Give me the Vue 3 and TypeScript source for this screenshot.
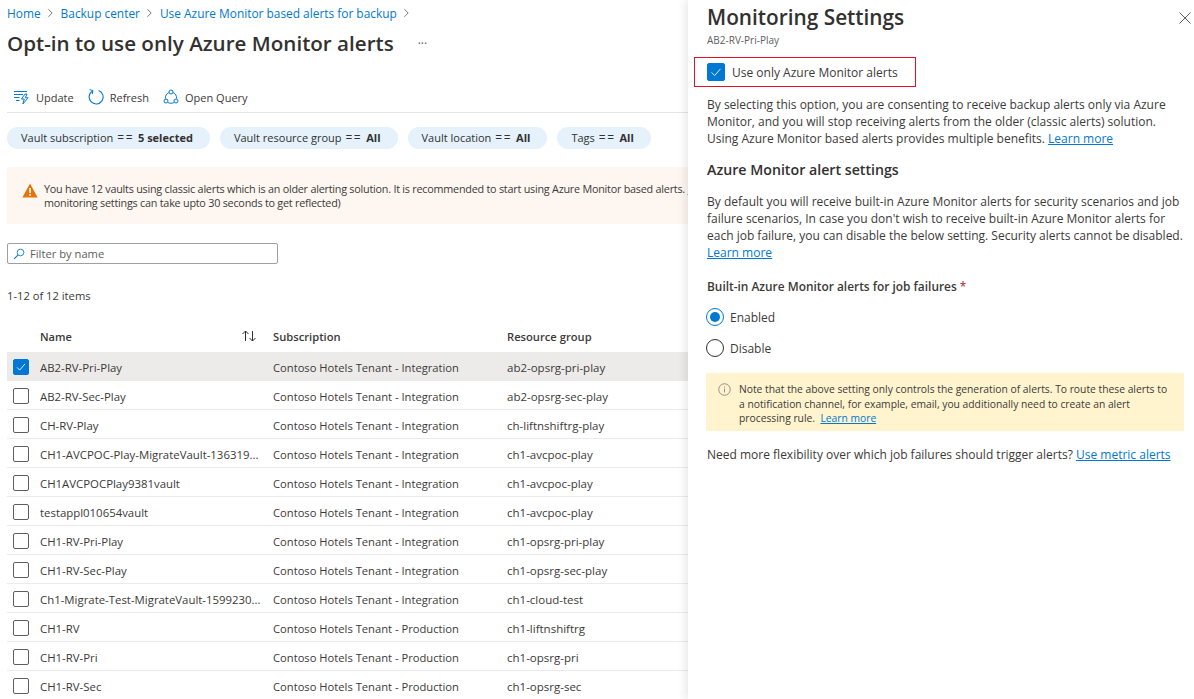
<script setup lang="ts">
interface Vault {
  name: string;
  subscription: string;
  group: string;
}

const tenant = 'Contoso Hotels Tenant - Integration';
const prod = 'Contoso Hotels Tenant - Production';

const vaults: Vault[] = [
  { name: 'AB2-RV-Pri-Play', subscription: tenant, group: 'ab2-opsrg-pri-play' },
  { name: 'AB2-RV-Sec-Play', subscription: tenant, group: 'ab2-opsrg-sec-play' },
  { name: 'CH-RV-Play', subscription: tenant, group: 'ch-liftnshiftrg-play' },
  { name: 'CH1-AVCPOC-Play-MigrateVault-136319...', subscription: tenant, group: 'ch1-avcpoc-play' },
  { name: 'CH1AVCPOCPlay9381vault', subscription: tenant, group: 'ch1-avcpoc-play' },
  { name: 'testappl010654vault', subscription: tenant, group: 'ch1-avcpoc-play' },
  { name: 'CH1-RV-Pri-Play', subscription: tenant, group: 'ch1-opsrg-pri-play' },
  { name: 'CH1-RV-Sec-Play', subscription: tenant, group: 'ch1-opsrg-sec-play' },
  { name: 'Ch1-Migrate-Test-MigrateVault-1599230...', subscription: tenant, group: 'ch1-cloud-test' },
  { name: 'CH1-RV', subscription: prod, group: 'ch1-liftnshiftrg' },
  { name: 'CH1-RV-Pri', subscription: prod, group: 'ch1-opsrg-pri' },
  { name: 'CH1-RV-Sec', subscription: prod, group: 'ch1-opsrg-sec' },
];

const pills = [
  { label: 'Vault subscription', value: '5 selected' },
  { label: 'Vault resource group', value: 'All' },
  { label: 'Vault location', value: 'All' },
  { label: 'Tags', value: 'All' },
];
</script>

<template>
  <div class="page">
    <main class="left">
      <nav class="crumbs">
        <a>Home</a>
        <svg class="chev" viewBox="0 0 8 12"><path d="M1.5 1.5 6 6l-4.5 4.5" /></svg>
        <a>Backup center</a>
        <svg class="chev" viewBox="0 0 8 12"><path d="M1.5 1.5 6 6l-4.5 4.5" /></svg>
        <a>Use Azure Monitor based alerts for backup</a>
        <svg class="chev" viewBox="0 0 8 12"><path d="M1.5 1.5 6 6l-4.5 4.5" /></svg>
      </nav>
      <div class="title-row">
        <h1>Opt-in to use only Azure Monitor alerts</h1>
        <span class="dots">···</span>
      </div>

      <div class="toolbar">
        <button class="tool">
          <svg viewBox="0 0 16 16" class="tool-icon">
            <path d="M0 2.5h13M0 5.5h9M0 8.5h5.5M2 11.5h3.5" fill="none" stroke="#0078d4" />
            <path d="M11 5 7.5 10h2.8L8.8 15l5.4-6.2h-2.9L13 5z" fill="none" stroke="#0078d4" />
          </svg>
          Update
        </button>
        <button class="tool">
          <svg viewBox="0 0 16 16" class="tool-icon">
            <path d="M4.6 1.9A7 7 0 1 0 10.6 1.4" fill="none" stroke="#0078d4" stroke-width="1.1" />
            <path d="M1.6.6 5 1.7 4.2 5" fill="none" stroke="#0078d4" />
          </svg>
          Refresh
        </button>
        <button class="tool">
          <svg viewBox="0 0 16 16" class="tool-icon">
            <path d="M5.9 3.6C3.6 4.6 2.2 6.8 2.4 9.6M10.1 3.6c2.3 1 3.7 3.2 3.5 6M5 13.6c1.8.9 4.2.9 6 0" fill="none" stroke="#0078d4" />
            <circle cx="8" cy="3" r="2" fill="#fff" stroke="#0078d4" />
            <circle cx="3" cy="12" r="2" fill="#fff" stroke="#0078d4" />
            <circle cx="13" cy="12" r="2" fill="#fff" stroke="#0078d4" />
          </svg>
          Open Query
        </button>
      </div>

      <div class="pills">
        <span v-for="p in pills" :key="p.label" class="pill">{{ p.label }}<span class="eq">==</span><b>{{ p.value }}</b></span>
      </div>

      <div class="banner">
        <svg class="warn" viewBox="0 0 16 15">
          <path d="M8 .5 15.6 14.5H.4z" fill="#e8710a" />
          <path d="M7.2 5h1.6v5H7.2zM7.2 11h1.6v1.7H7.2z" fill="#fff" />
        </svg>
        <p>You have 12 vaults using classic alerts which is an older alerting solution. It is recommended to start using Azure Monitor based alerts. <a>Learn more</a><br />monitoring settings can take upto 30 seconds to get reflected)</p>
      </div>

      <div class="filter">
        <svg viewBox="0 0 14 14" class="search">
          <circle cx="8.8" cy="5.2" r="3.9" fill="none" stroke="#0078d4" />
          <path d="M6 8 1.3 12.7" stroke="#0078d4" stroke-width="1.2" />
        </svg>
        <span>Filter by name</span>
      </div>

      <div class="count">1-12 of 12 items</div>

      <div class="table">
        <div class="row head">
          <span class="cell-check"></span>
          <span class="cell-name">Name</span>
          <svg class="sort" viewBox="0 0 16 12">
            <path d="M4.5 11V1M1.5 4l3-3 3 3M11.5 1v10M8.5 8l3 3 3-3" fill="none" stroke="#323130" />
          </svg>
          <span class="cell-sub">Subscription</span>
          <span class="cell-group">Resource group</span>
        </div>
        <div v-for="(v, i) in vaults" :key="v.name" class="row" :class="{ selected: i === 0 }">
          <span class="cell-check">
            <span class="check" :class="{ on: i === 0 }">
              <svg v-if="i === 0" viewBox="0 0 16 16"><path d="M3.5 8.5 6.5 11.5 12.5 4.5" fill="none" stroke="#fff" /></svg>
            </span>
          </span>
          <span class="cell-name">{{ v.name }}</span>
          <span class="cell-sub">{{ v.subscription }}</span>
          <span class="cell-group">{{ v.group }}</span>
        </div>
      </div>
    </main>

    <aside class="panel">
      <div class="panel-head">
        <div>
          <h2>Monitoring Settings</h2>
          <div class="sub">AB2-RV-Pri-Play</div>
        </div>
        <svg class="close" viewBox="0 0 12 12"><path d="M.5.5l11 11M11.5.5l-11 11" stroke="#605e5c" /></svg>
      </div>

      <div class="opt-in">
        <span class="check big on">
          <svg viewBox="0 0 18 18"><path d="M4 9.5 7.5 13 14 5.5" fill="none" stroke="#fff" /></svg>
        </span>
        <span>Use only Azure Monitor alerts</span>
      </div>

      <p class="para">By selecting this option, you are consenting to receive backup alerts only via Azure Monitor, and you will stop receiving alerts from the older (classic alerts) solution. Using Azure Monitor based alerts provides multiple benefits. <a>Learn more</a></p>

      <h3>Azure Monitor alert settings</h3>

      <p class="para second">By default you will receive built-in Azure Monitor alerts for security scenarios and job failure scenarios, In case you don't wish to receive built-in Azure Monitor alerts for each job failure, you can disable the below setting. Security alerts cannot be disabled. <a>Learn more</a></p>

      <div class="field-label">Built-in Azure Monitor alerts for job failures <span class="req">*</span></div>

      <div class="radio-row">
        <span class="radio on"></span>
        <span>Enabled</span>
      </div>
      <div class="radio-row next">
        <span class="radio"></span>
        <span>Disable</span>
      </div>

      <div class="note">
        <svg class="info" viewBox="0 0 14 14">
          <circle cx="7" cy="7" r="6.2" fill="none" stroke="#8a8886" />
          <path d="M7 6v4.2M7 3.7v1.2" stroke="#8a8886" />
        </svg>
        <p>Note that the above setting only controls the generation of alerts. To route these alerts to a notification channel, for example, email, you additionally need to create an alert processing rule. &nbsp;<a>Learn more</a></p>
      </div>

      <p class="para last">Need more flexibility over which job failures should trigger alerts? <a>Use metric alerts</a></p>
    </aside>
  </div>
</template>

<style>
html,
body {
  margin: 0;
  background: #fff;
  overflow: hidden;
}
</style>

<style scoped>
.page {
  display: flex;
  width: 1194px;
  height: 699px;
  overflow: hidden;
  font-family: "Open Sans", "Noto Sans", sans-serif;
  font-size: 12px;
  color: #3b3a39;
}

.left {
  width: 688px;
  flex: none;
  padding-left: 7px;
  box-sizing: border-box;
  overflow: hidden;
}

.crumbs {
  display: flex;
  align-items: center;
  height: 16px;
  margin-top: 5px;
  color: #0078d4;
  font-size: 11.9px;
  white-space: nowrap;
}

.chev {
  width: 7px;
  height: 10px;
  margin: 0 7px 0 6px;
  fill: none;
  stroke: #605e5c;
}

.title-row {
  display: flex;
  align-items: center;
  height: 30px;
  margin-top: 7px;
}

h1 {
  margin: 0;
  font-size: 20.6px;
  font-weight: 600;
  color: #323130;
  white-space: nowrap;
}

.dots {
  margin-left: 24px;
  color: #605e5c;
  font-size: 12px;
}

.toolbar {
  display: flex;
  align-items: center;
  gap: 14px;
  height: 24px;
  margin-top: 27px;
  padding: 0 0 3px 7px;
  border-bottom: 1px solid #e5e5e5;
}

.tool {
  display: flex;
  align-items: center;
  gap: 6px;
  padding: 0;
  border: 0;
  background: none;
  font: inherit;
  color: #3b3a39;
  font-size: 11px;
}

.tool-icon {
  width: 16px;
  height: 16px;
}

.pills {
  display: flex;
  gap: 10px;
  margin-top: 14px;
}

.pill {
  display: block;
  height: 22px;
  line-height: 21px;
  padding: 0 17px 0 14px;
  border-radius: 11px;
  background: #e5f1fb;
  color: #323130;
  font-size: 11px;
  white-space: nowrap;
}

.eq {
  margin: 0 4px;
  font-size: 12px;
  letter-spacing: 1.5px;
}

.pill b {
  font-weight: 700;
}

.banner {
  display: flex;
  align-items: flex-start;
  height: 57px;
  margin-top: 18px;
  padding: 15px 0 0 15px;
  box-sizing: border-box;
  width: 700px;
  background: #fef7f1;
  white-space: nowrap;
}

.banner p {
  margin: 0;
  font-size: 10.8px;
  letter-spacing: -0.23px;
  line-height: 14px;
  color: #3b3a39;
}

.banner a {
  text-decoration: underline;
}

.warn {
  flex: none;
  width: 16px;
  height: 15px;
  margin: 1px 6px 0 0;
}

.filter {
  display: flex;
  align-items: center;
  gap: 5px;
  width: 271px;
  height: 21px;
  margin-top: 19px;
  padding-left: 5px;
  box-sizing: border-box;
  border: 1px solid #a19f9d;
  border-radius: 2px;
  color: #605e5c;
  font-size: 11.2px;
}

.search {
  width: 12px;
  height: 12px;
}

.count {
  margin-top: 24px;
  height: 16px;
  line-height: 16px;
  font-size: 11.2px;
}

.table {
  margin-top: 24px;
  width: 681px;
}

.row {
  display: flex;
  align-items: center;
  height: 29px;
  padding-top: 2px;
  box-sizing: border-box;
  border-bottom: 1px solid #edebe9;
  font-size: 11.2px;
  white-space: nowrap;
}

.row.head {
  height: 16px;
  padding-top: 0;
  margin-bottom: 8px;
  border-bottom: 0;
  font-weight: 600;
}

.row.selected {
  background: #edebe9;
}

.cell-check {
  width: 33px;
  flex: none;
  padding-left: 6px;
  box-sizing: border-box;
  display: flex;
}

.cell-name {
  width: 233px;
  flex: none;
  overflow: hidden;
  font-size: 11.4px;
}

.cell-sub {
  width: 234px;
  flex: none;
}

.cell-group {
  font-size: 11.5px;
}

.head .cell-name {
  width: 201px;
  font-size: 11px;
}

.head .cell-group {
  font-size: 11.2px;
}

.sort {
  width: 16px;
  height: 12px;
  flex: none;
  margin-right: 16px;
}

.check {
  display: block;
  width: 14px;
  height: 14px;
  border: 1px solid #605e5c;
  border-radius: 2px;
  flex: none;
}

.check.on {
  background: #0078d4;
  border-color: #0078d4;
}

.check svg {
  display: block;
  width: 100%;
  height: 100%;
}

.panel {
  width: 506px;
  flex: none;
  box-sizing: border-box;
  padding: 0 10px 0 19px;
  background: #fff;
  box-shadow: -3px 0 8px rgba(0, 0, 0, 0.09);
  position: relative;
}

.panel-head {
  display: flex;
  justify-content: space-between;
  align-items: flex-start;
}

h2 {
  margin: 2px 0 0;
  height: 30px;
  line-height: 30px;
  font-size: 20.8px;
  font-weight: 600;
  color: #323130;
}

.sub {
  height: 14px;
  line-height: 14px;
  font-size: 10px;
  color: #605e5c;
  margin-top: 1px;
}

.close {
  width: 12px;
  height: 12px;
  margin: 12px -7px 0 0;
}

.opt-in {
  display: flex;
  align-items: center;
  gap: 7px;
  width: 222px;
  height: 30px;
  margin: 10px 0 0 -13px;
  padding-left: 12px;
  box-sizing: border-box;
  border: 1.5px solid #e81123;
  font-size: 12px;
}

.check.big {
  width: 16px;
  height: 16px;
}

.para {
  margin: 9px 0 0;
  font-size: 12px;
  line-height: 17px;
  color: #3b3a39;
}

a {
  color: #0078d4;
}

.para a,
.note a {
  text-decoration: underline;
}

h3 {
  margin: 13px 0 0;
  height: 20px;
  line-height: 20px;
  font-size: 14.2px;
  font-weight: 600;
  color: #323130;
}

.para.second {
  margin-top: 13px;
}

.field-label {
  margin-top: 17px;
  height: 17px;
  line-height: 17px;
  font-size: 11.9px;
  font-weight: 600;
}

.req {
  color: #a4262c;
  font-weight: 400;
}

.radio-row {
  display: flex;
  align-items: center;
  gap: 6px;
  height: 18px;
  margin: 13px 0 0 -1px;
  font-size: 12px;
}

.radio-row.next {
  margin-top: 13px;
}

.radio {
  display: block;
  width: 16px;
  height: 16px;
  border: 1px solid #323130;
  border-radius: 50%;
  position: relative;
}

.radio.on {
  border-color: #0078d4;
}

.radio.on::after {
  content: "";
  position: absolute;
  inset: 3px;
  border-radius: 50%;
  background: #0078d4;
}

.note {
  display: flex;
  gap: 8px;
  margin: 16px 0 0 -1px;
  padding: 9px 14px 5px 12px;
  background: #fff4ce;
  font-size: 10.3px;
  line-height: 14.5px;
}

.note p {
  margin: 0;
}

.info {
  flex: none;
  width: 13px;
  height: 13px;
  margin-top: 1px;
}

.para.last {
  margin-top: 15px;
}
</style>
